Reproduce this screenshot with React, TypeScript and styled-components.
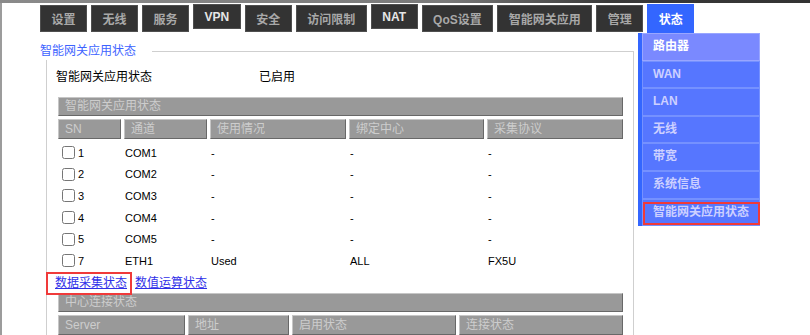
import styled, { createGlobalStyle } from "styled-components";

const GlobalStyle = createGlobalStyle`
  html, body {
    margin: 0;
    padding: 0;
    background: #fff;
  }
  body {
    font-family: "Liberation Sans", "Noto Sans CJK SC", sans-serif;
    font-size: 12px;
    color: #000;
    overflow: hidden;
  }
`;

const Screen = styled.div`
  width: 810px;
  height: 335px;
  display: flex;
  flex-direction: column;
  overflow: hidden;
`;

const TopStrip = styled.div`
  height: 3px;
  flex: none;
  background: linear-gradient(to right, #8a8a8a 0%, #7a7a7a 55%, #3a3a3a 75%, #333 100%);
`;

const Frame = styled.div`
  flex: 1;
  border-left: 2px solid #9c9c9c;
`;

const TabBar = styled.div`
  display: flex;
  align-items: flex-start;
  gap: 4px;
  padding: 2px 0 0 38px;
`;

const Tab = styled.div<{ $active?: boolean; $latin?: boolean }>`
  box-sizing: border-box;
  display: flex;
  align-items: center;
  height: ${(p) => (p.$active ? "29px" : p.$latin ? "25px" : "27px")};
  margin-top: ${(p) => (p.$active || p.$latin ? "-1px" : "0")};
  padding: 0 10.5px;
  border: 1px solid ${(p) => (p.$active ? "#3366ff" : "#4f4f4f")};
  background: ${(p) => (p.$active ? "#3366ff" : "#333")};
  color: ${(p) => (p.$active ? "#fff" : p.$latin ? "#e6e6e6" : "#a8a8a8")};
  font-weight: bold;
  white-space: nowrap;
`;

const Main = styled.div`
  display: flex;
  align-items: flex-start;
  gap: 4px;
  padding-left: 38px;
`;

const Content = styled.div`
  width: 594px;
`;

const Fieldset = styled.fieldset`
  box-sizing: border-box;
  width: 588px;
  margin: 10px 0 0 6px;
  padding: 0 10px 10px 9px;
  border: 1px solid #cfcfcf;
  min-width: 0;
`;

const Legend = styled.legend`
  margin-left: -16px;
  padding: 0 16px 0 0;
  line-height: 17px;
  background: #fff;
  color: #3d63ff;
`;

const StatusRow = styled.div`
  display: grid;
  grid-template-columns: 203px 1fr;
  height: 18px;
  line-height: 18px;
  margin-top: 8px;
`;

const Table = styled.div<{ $cols: string; $top?: number }>`
  display: grid;
  grid-template-columns: ${(p) => p.$cols};
  gap: 3px;
  width: 565px;
  margin: ${(p) => p.$top ?? 0}px 0 0 2px;
`;

const bevel = `
  box-sizing: border-box;
  border: 1px solid;
  border-color: #c6c6c6 #686868 #686868 #c6c6c6;
  background: #999;
  color: #cdcdcd;
  padding-left: 6px;
`;

const CaptionBar = styled.div`
  ${bevel}
  grid-column: 1 / -1;
  height: 19px;
  line-height: 17px;
`;

const HeadCell = styled.div`
  ${bevel}
  height: 20px;
  line-height: 18px;
`;

const DataCell = styled.div<{ $first?: boolean }>`
  box-sizing: border-box;
  display: flex;
  align-items: center;
  height: 18.6px;
  padding: 3px 1px 0 ${(p) => (p.$first ? "0" : "1px")};
  font-size: 11px;
`;

const Check = styled.input`
  width: 13px;
  height: 13px;
  margin: 0 3px 0 4px;
`;

const LinksRow = styled.div`
  display: flex;
  gap: 8px;
  height: 18px;
  line-height: 18px;
  margin: 5.4px 0 1px -1px;
`;

const Link = styled.a<{ $marked?: boolean }>`
  position: relative;
  color: #2f2fe8;
  text-decoration: underline;
  cursor: pointer;
  &::after {
    content: "";
    display: ${(p) => (p.$marked ? "block" : "none")};
    position: absolute;
    left: -9px;
    right: -5px;
    top: -2px;
    bottom: -3px;
    border: 2px solid #f03a3a;
  }
`;

const SideMenu = styled.div`
  width: 118px;
  border-left: 4px solid #3366ff;
`;

const MenuItem = styled.div<{ $current?: boolean; $marked?: boolean }>`
  position: relative;
  box-sizing: border-box;
  height: 27.6px;
  line-height: 25.6px;
  padding-left: 10px;
  border: 1px solid ${(p) => (p.$current ? "#99a6ff" : "#7591ff")};
  background: ${(p) => (p.$current ? "#7a89ff" : "#5676ff")};
  color: ${(p) => (p.$current ? "#fff" : "#cdd0ff")};
  font-weight: bold;
  white-space: nowrap;
  &::after {
    content: "";
    display: ${(p) => (p.$marked ? "block" : "none")};
    position: absolute;
    left: 0;
    right: -1px;
    top: 2px;
    bottom: 0;
    border: 2px solid #f03a3a;
  }
`;

const tabs = [
  { label: "设置" },
  { label: "无线" },
  { label: "服务" },
  { label: "VPN", latin: true },
  { label: "安全" },
  { label: "访问限制" },
  { label: "NAT", latin: true },
  { label: "QoS设置" },
  { label: "智能网关应用" },
  { label: "管理" },
  { label: "状态", active: true },
];

const menu = ["路由器", "WAN", "LAN", "无线", "带宽", "系统信息", "智能网关应用状态"];

const channels = [
  { sn: 1, ch: "COM1", use: "-", center: "-", proto: "-" },
  { sn: 2, ch: "COM2", use: "-", center: "-", proto: "-" },
  { sn: 3, ch: "COM3", use: "-", center: "-", proto: "-" },
  { sn: 4, ch: "COM4", use: "-", center: "-", proto: "-" },
  { sn: 5, ch: "COM5", use: "-", center: "-", proto: "-" },
  { sn: 7, ch: "ETH1", use: "Used", center: "ALL", proto: "FX5U" },
];

export default function App() {
  return (
    <Screen>
      <GlobalStyle />
      <TopStrip />
      <Frame>
        <TabBar>
          {tabs.map((t) => (
            <Tab key={t.label} $active={t.active} $latin={t.latin}>
              {t.label}
            </Tab>
          ))}
        </TabBar>
        <Main>
          <Content>
            <Fieldset>
              <Legend>智能网关应用状态</Legend>
              <StatusRow>
                <span>智能网关应用状态</span>
                <span>已启用</span>
              </StatusRow>
              <Table $cols="63px 83px 136px 135px 136px" $top={11}>
                <CaptionBar>智能网关应用状态</CaptionBar>
                <HeadCell>SN</HeadCell>
                <HeadCell>通道</HeadCell>
                <HeadCell>使用情况</HeadCell>
                <HeadCell>绑定中心</HeadCell>
                <HeadCell>采集协议</HeadCell>
                {channels.flatMap((c) => [
                  <DataCell key={`sn${c.sn}`} $first>
                    <Check type="checkbox" />
                    {c.sn}
                  </DataCell>,
                  <DataCell key={`ch${c.sn}`}>{c.ch}</DataCell>,
                  <DataCell key={`u${c.sn}`}>{c.use}</DataCell>,
                  <DataCell key={`c${c.sn}`}>{c.center}</DataCell>,
                  <DataCell key={`p${c.sn}`}>{c.proto}</DataCell>,
                ])}
              </Table>
              <LinksRow>
                <Link $marked>数据采集状态</Link>
                <Link>数值运算状态</Link>
              </LinksRow>
              <Table $cols="127px 101px 164px 164px">
                <CaptionBar>中心连接状态</CaptionBar>
                <HeadCell>Server</HeadCell>
                <HeadCell>地址</HeadCell>
                <HeadCell>启用状态</HeadCell>
                <HeadCell>连接状态</HeadCell>
              </Table>
            </Fieldset>
          </Content>
          <SideMenu>
            {menu.map((m, i) => (
              <MenuItem key={m} $current={i === 0} $marked={i === menu.length - 1}>
                {m}
              </MenuItem>
            ))}
          </SideMenu>
        </Main>
      </Frame>
    </Screen>
  );
}
